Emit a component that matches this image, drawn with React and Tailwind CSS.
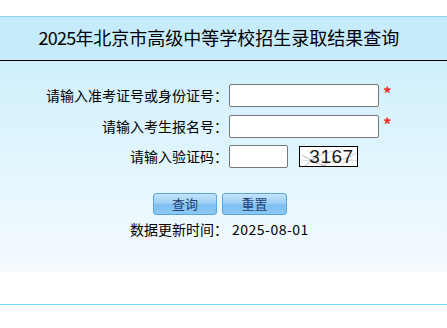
import React from "react";

const cjk = { fontFamily: '"Noto Sans CJK SC", "Noto Sans", sans-serif' };

function Label({ children }) {
  return (
    <div className="w-[228px] shrink-0 text-right text-[14px] leading-[23px] text-black">
      {children}
    </div>
  );
}

function Captcha() {
  return (
    <div className="relative ml-[11px] mt-px flex h-[21px] w-[59px] items-center justify-center overflow-hidden border border-black bg-white">
      <svg className="absolute inset-0" width="59" height="21" viewBox="0 0 59 21">
        <path d="M2 8 C12 14, 20 18, 30 20" stroke="#9a9a9a" strokeWidth="0.7" fill="none" />
        <path d="M6 19 C14 10, 22 6, 34 4" stroke="#b0b0b0" strokeWidth="0.6" fill="none" />
        <path d="M20 20 C30 12, 42 16, 56 6" stroke="#a5a5a5" strokeWidth="0.6" fill="none" />
        <path d="M1 14 C10 12, 16 16, 24 13" stroke="#bdbdbd" strokeWidth="0.5" fill="none" />
        <path d="M4 20 C8 15, 12 12, 18 11" stroke="#aaaaaa" strokeWidth="0.5" fill="none" />
        <path d="M40 20 C44 14, 50 12, 58 14" stroke="#b8b8b8" strokeWidth="0.5" fill="none" />
        <path d="M8 3 L18 20" stroke="#c4c4c4" strokeWidth="0.5" />
        <path d="M48 2 L54 20" stroke="#c4c4c4" strokeWidth="0.5" />
      </svg>
      <span
        className="relative ml-[6px] text-[19px] font-normal leading-none tracking-[0.5px] text-[#1a1a1a]"
        style={{ fontFamily: '"Liberation Sans", Arial, sans-serif' }}
      >
        3167
      </span>
    </div>
  );
}

function Btn({ children, w }) {
  return (
    <button
      className={`h-[22px] ${w} rounded-[3px] border border-[#5aa7e0] bg-[linear-gradient(to_bottom,#c3e3fa_0%,#9ed0f5_45%,#7fbff1_55%,#8ccaf4_100%)] text-[13px] leading-[20px] text-[#1f3f72]`}
      style={cjk}
    >
      {children}
    </button>
  );
}

function Star() {
  return (
    <span className="ml-[4px] mt-[2px] text-[17px] font-bold leading-[13px] text-[#f0302a]">*</span>
  );
}

export default function App() {
  return (
    <div className="h-[328px] w-[447px] overflow-hidden bg-white" style={cjk}>
      <div className="h-[16px]" />
      <div className="flex h-[45px] items-center justify-center border-t border-b border-t-[#8fd6ea] border-b-black bg-[#c6ebfb] pb-[2px] pr-[9px] text-[18px] text-black">
        <span className="tracking-[-0.8px]">2025</span>
        <span>年北京市高级中等学校招生录取结果查询</span>
      </div>
      <div className="h-[211px] bg-[linear-gradient(to_bottom,#cff0fc,#f6fbff)] pt-[23px]">
        <div className="flex items-start">
          <Label>请输入准考证号或身份证号：</Label>
          <div className="ml-px h-[23px] w-[150px] rounded-[2px] border border-[#777] bg-white" />
          <Star />
        </div>
        <div className="mt-[8px] flex items-start">
          <Label>请输入考生报名号：</Label>
          <div className="ml-px h-[23px] w-[150px] rounded-[2px] border border-[#777] bg-white" />
          <Star />
        </div>
        <div className="mt-[7px] flex items-start">
          <Label>请输入验证码：</Label>
          <div className="ml-px h-[23px] w-[59px] rounded-[2px] border border-[#777] bg-white" />
          <Captcha />
        </div>
        <div className="mt-[25px] flex gap-[5px] pl-[153px]">
          <Btn w="w-[64px]">查询</Btn>
          <Btn w="w-[65px]">重置</Btn>
        </div>
        <div className="mt-[5px] flex pl-[130px] text-[14px] leading-[18px] text-black">
          <span>数据更新时间：</span>
          <span className="ml-[4px] tracking-[0.5px]">2025-08-01</span>
        </div>
      </div>
      <div className="h-[32px] bg-white" />
      <div className="h-px bg-[#74d8f0]" />
    </div>
  );
}
